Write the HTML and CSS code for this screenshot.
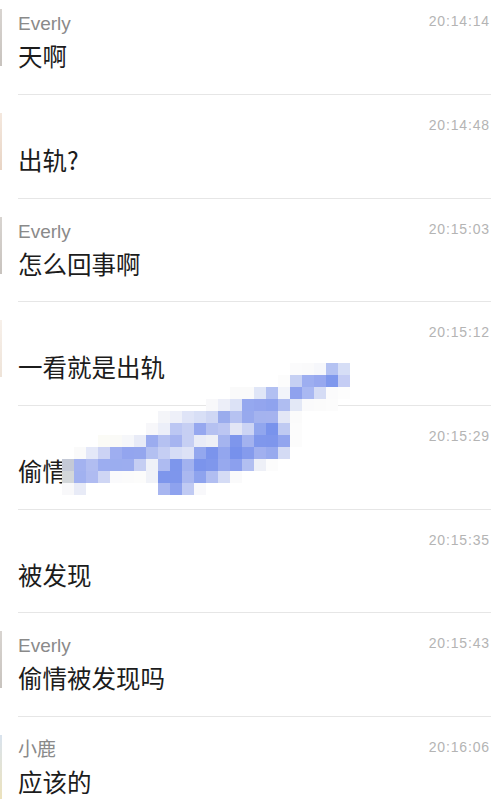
FILE: index.html
```html
<!DOCTYPE html>
<html lang="zh-CN">
<head>
  <meta charset="UTF-8">
  <meta name="viewport" content="width=device-width, initial-scale=1.0">
  <link rel="stylesheet" href="styles.css">
</head>
<body>
  <div class="chat">
    <div class="msg">
      <div class="avatar av-gray"></div>
      <div class="body">
        <div class="head"><span class="name">Everly</span><span class="time">20:14:14</span></div>
        <div class="text">天啊</div>
      </div>
    </div>
    <div class="msg">
      <div class="avatar av-peach"></div>
      <div class="body">
        <div class="head"><span class="name"></span><span class="time">20:14:48</span></div>
        <div class="text">出轨?</div>
      </div>
    </div>
    <div class="msg">
      <div class="avatar av-gray"></div>
      <div class="body">
        <div class="head"><span class="name">Everly</span><span class="time">20:15:03</span></div>
        <div class="text">怎么回事啊</div>
      </div>
    </div>
    <div class="msg">
      <div class="avatar av-cream"></div>
      <div class="body">
        <div class="head"><span class="name"></span><span class="time">20:15:12</span></div>
        <div class="text">一看就是出轨</div>
      </div>
    </div>
    <div class="msg">
      <div class="avatar"></div>
      <div class="body">
        <div class="head"><span class="name"></span><span class="time">20:15:29</span></div>
        <div class="text">偷情</div>
      </div>
    </div>
    <div class="msg">
      <div class="avatar"></div>
      <div class="body">
        <div class="head"><span class="name"></span><span class="time">20:15:35</span></div>
        <div class="text">被发现</div>
      </div>
    </div>
    <div class="msg">
      <div class="avatar av-gray"></div>
      <div class="body">
        <div class="head"><span class="name">Everly</span><span class="time">20:15:43</span></div>
        <div class="text">偷情被发现吗</div>
      </div>
    </div>
    <div class="msg">
      <div class="avatar av-blue"></div>
      <div class="body">
        <div class="head"><span class="name">小鹿</span><span class="time">20:16:06</span></div>
        <div class="text">应该的</div>
      </div>
    </div>

    <!-- pixelated blur over part of the chat -->
    <div class="mosaic" id="mosaic"></div>
  </div>

  <script>
    // each row: first column, then colours from there on ('' = empty)
    var mosaicRows = [
      [19, 'fbfbfc', 'fafafb', 'f6f7fb', 'b4c2f2', 'd6def6'],
      [18, 'fcfcfc', 'c6d0f3', '9daef0', '97a8ef', '7f98ed', 'c5cdf4'],
      [14, 'fafafa', 'fafafa', 'e0e6f7', 'b2c0f2', 'f2f4fa', '8fa2ee', 'a9b8f2', 'd5dcf5', 'fbfbfc', 'fdfdfd'],
      [12, 'f8f8fa', 'eceef8', 'dce2f6', '95a8ef', '93a5ee', '8fa3ee', 'afbdf1', 'e3e8f6', 'fafafb', 'fbfbfb', 'fcfcfc'],
      [8, 'f4f5f9', 'eef0f9', 'dfe4f7', 'd8dff6', 'cfd7f4', '9aaced', 'b6c2f1', '97a9ee', 'a4b3ef', 'a5b3ef', 'e3e7f6', 'fbfbfb'],
      [7, 'f7f7fa', 'eceff9', 'bcc7f3', 'c6cff3', '96a8ef', 'b5c1f1', 'bcc6f2', 'e3e6f5', 'ccd4f4', '91a6ee', '7993ec', 'bfcaf2', 'fcfcfc'],
      [3, 'fbfbf6', 'fafaf7', 'f6f7fa', 'e8ebf7', '9bacef', 'b5c1f1', 'a6b4f0', 'c6cff3', 'e9ecf7', 'eef0f6', 'a5b4ef', '7e96ec', 'a3b2ef', '7f97ec', '7e96ec', '92a5ee', 'fcfcfc'],
      [1, 'fafafa', 'e4e8f8', 'ccd3f4', '9eaef0', '93a5ef', '94a6ee', 'b3c0f1', 'c5cef3', 'd6ddf6', 'dde2f6', '93a7ee', '7b94ec', '93a6ee', '7791ec', '859bed', 'a1b0ef', '98aaee', 'd4dbf4'],
      [0, 'c4c9d6', 'a3b2f0', 'b1bdf1', '9cadf0', '9badef', '9cadef', 'c5cef3', 'eff1f8', 'aebbf1', '7d96ec', 'a2b2ef', '7b94ec', '7f97ec', '97a9ee', '8ca0ee', 'b2bff1', 'eef0f7', 'fcfcfc'],
      [0, 'd3d7da', 'a1b1f0', 'afbbf1', 'cfd6f4', 'fafafc', 'fbfbfb', 'fcfcfb', 'f0f2f8', '7e96ec', '7e96ec', 'aab8f0', '8ea3ee', 'b1bef1', 'd5dcf5', 'fafafb'],
      [0, 'f8f8fa', 'e8ebf7', '', '', '', '', '', '', 'a8b6f0', '8ea2ee', 'c0caf3', 'f8f8fb']
    ];

    var mosaic = document.getElementById('mosaic');
    mosaicRows.forEach(function (row, r) {
      for (var i = 1; i < row.length; i++) {
        if (!row[i]) continue;
        var cell = document.createElement('div');
        cell.className = 'cell';
        cell.style.gridRow = (r + 1);
        cell.style.gridColumn = (row[0] + i);
        cell.style.background = '#' + row[i];
        mosaic.appendChild(cell);
      }
    });
  </script>
</body>
</html>
```

FILE: styles.css
```css
html {
  overflow: hidden;
}
body {
  margin: 0;
  background-color: #fff;
  font-family: "Liberation Sans", "Noto Sans CJK SC", sans-serif;
}
.chat {
  position: relative;
  margin-top: -8.67px; /* list is scrolled a little */
}
.msg {
  display: flex;
  height: 103.67px;
}
.avatar {
  flex: none;
  width: 2px;
  height: 57px;
  margin-top: 18px;
}
.av-gray {
  background: linear-gradient(#d8d4d0, #c8c3be);
}
.av-peach {
  background: linear-gradient(#f4e8de, #e8d4c4);
}
.av-cream {
  background: linear-gradient(#f7f0ea, #eee3d8);
}
.av-blue {
  height: 64px;
  background: linear-gradient(#d9e3ee, #ece2bc);
}
.body {
  flex: 1;
  margin-left: 16px;
  margin-right: 12px;
  padding-top: 21px;
  border-bottom: 1px solid #e6e6e6;
  box-sizing: border-box;
}
.head {
  display: flex;
  justify-content: space-between;
  align-items: flex-start;
  height: 24px;
}
.name {
  font-size: 19px;
  line-height: 24px;
  color: #8a8a8a;
}
.time {
  font-size: 14px;
  line-height: 16px;
  margin-top: 1px;
  margin-right: 1px;
  letter-spacing: 0.85px;
  color: #b4b4b4;
}
.text {
  margin-top: 4px;
  font-family: "Noto Sans CJK SC", sans-serif;
  font-size: 24.5px;
  line-height: 32px;
  color: #1c1c1c;
}
.mosaic {
  position: absolute;
  left: 62px;
  top: 371.67px;
  display: grid;
  grid-template-columns: repeat(24, 12px);
  grid-template-rows: repeat(11, 12px);
}
```
